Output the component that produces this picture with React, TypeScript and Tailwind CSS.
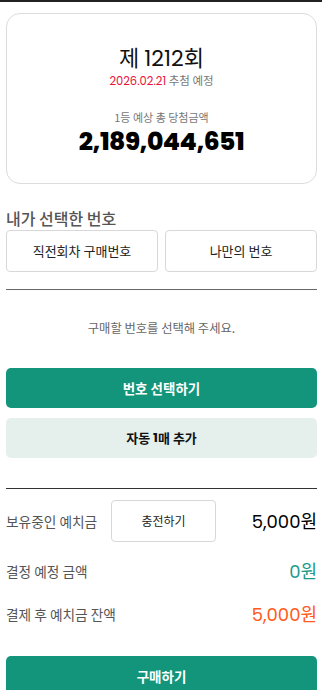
import React from "react";

const KR = { fontFamily: '"Noto Sans CJK KR", "Noto Sans", sans-serif' };
const NUM = { fontFamily: 'Poppins, Lato, "Noto Sans CJK KR", sans-serif' };

export default function App() {
  return (
    <div className="w-[322px] h-[690px] overflow-hidden bg-white" style={KR}>
      <div className="h-[2px] bg-[#222]" />
      <div className="pl-[6px] pr-[5px]">
        <div className="mt-[11px] h-[171px] rounded-[14px] border border-[#dcdcdc] flex flex-col items-center">
          <div className="mt-[28px] text-[22px] leading-[28px] text-[#111]">
            제 <span style={NUM}>1212</span>회
          </div>
          <div className="mt-[-1px] text-[11.5px] leading-[16px]">
            <span className="text-[#e8113c]" style={NUM}>2026.02.21</span>{" "}
            <span className="text-[#777]">추첨 예정</span>
          </div>
          <div className="mt-[21px] text-[11px] leading-[14px] text-[#777]">1등 예상 총 당첨금액</div>
          <div className="mt-[3px] text-[25px] leading-[30px] font-extrabold text-black tracking-[-0.5px]" style={NUM}>
            2,189,044,651
          </div>
        </div>

        <div className="mt-[24px] text-[16px] leading-[20px] text-[#555] font-medium">내가 선택한 번호</div>
        <div className="mt-[2px] flex gap-[7px]">
          <div className="flex-1 h-[42px] rounded-[4px] border border-[#d8d8d8] flex items-center justify-center text-[13px] text-[#222]">
            직전회차 구매번호
          </div>
          <div className="flex-1 h-[42px] rounded-[4px] border border-[#d8d8d8] flex items-center justify-center text-[13px] text-[#222]">
            나만의 번호
          </div>
        </div>
        <div className="mt-[17px] h-[1px] bg-[#666]" />
        <div className="mt-[30px] text-center text-[12.3px] leading-[16px] text-[#666]">구매할 번호를 선택해 주세요.</div>

        <div className="mt-[32px] h-[40px] rounded-[5px] bg-[#12957b] flex items-center justify-center text-white text-[13.5px] font-bold">
          번호 선택하기
        </div>
        <div className="mt-[10px] h-[40px] rounded-[5px] bg-[#e5f0ed] flex items-center justify-center text-[#111] text-[13px] font-bold">
          자동 <span style={NUM} className="ml-[3px]">1</span>매 추가
        </div>

        <div className="mt-[30px] h-[1px] bg-[#333]" />

        <div className="mt-[11px] h-[42px] flex items-center">
          <div className="w-[105px] text-[13.7px] text-[#555]">보유중인 예치금</div>
          <div className="w-[105px] h-[42px] rounded-[4px] border border-[#d8d8d8] flex items-center justify-center text-[12px] text-[#222]">
            충전하기
          </div>
          <div className="flex-1 text-right text-[18px] text-black" style={NUM}>5,000원</div>
        </div>
        <div className="mt-[17px] h-[24px] flex items-center">
          <div className="flex-1 text-[13.7px] text-[#555]">결정 예정 금액</div>
          <div className="text-[18px] text-[#1b9b8b]" style={NUM}>0원</div>
        </div>
        <div className="mt-[19px] h-[24px] flex items-center">
          <div className="flex-1 text-[13.7px] text-[#555]">결제 후 예치금 잔액</div>
          <div className="text-[18px] text-[#ff5a1a]" style={NUM}>5,000원</div>
        </div>

        <div className="mt-[30px] h-[40px] rounded-t-[5px] bg-[#12957b] flex items-center justify-center text-white text-[13.5px] font-bold">
          구매하기
        </div>
      </div>
    </div>
  );
}
